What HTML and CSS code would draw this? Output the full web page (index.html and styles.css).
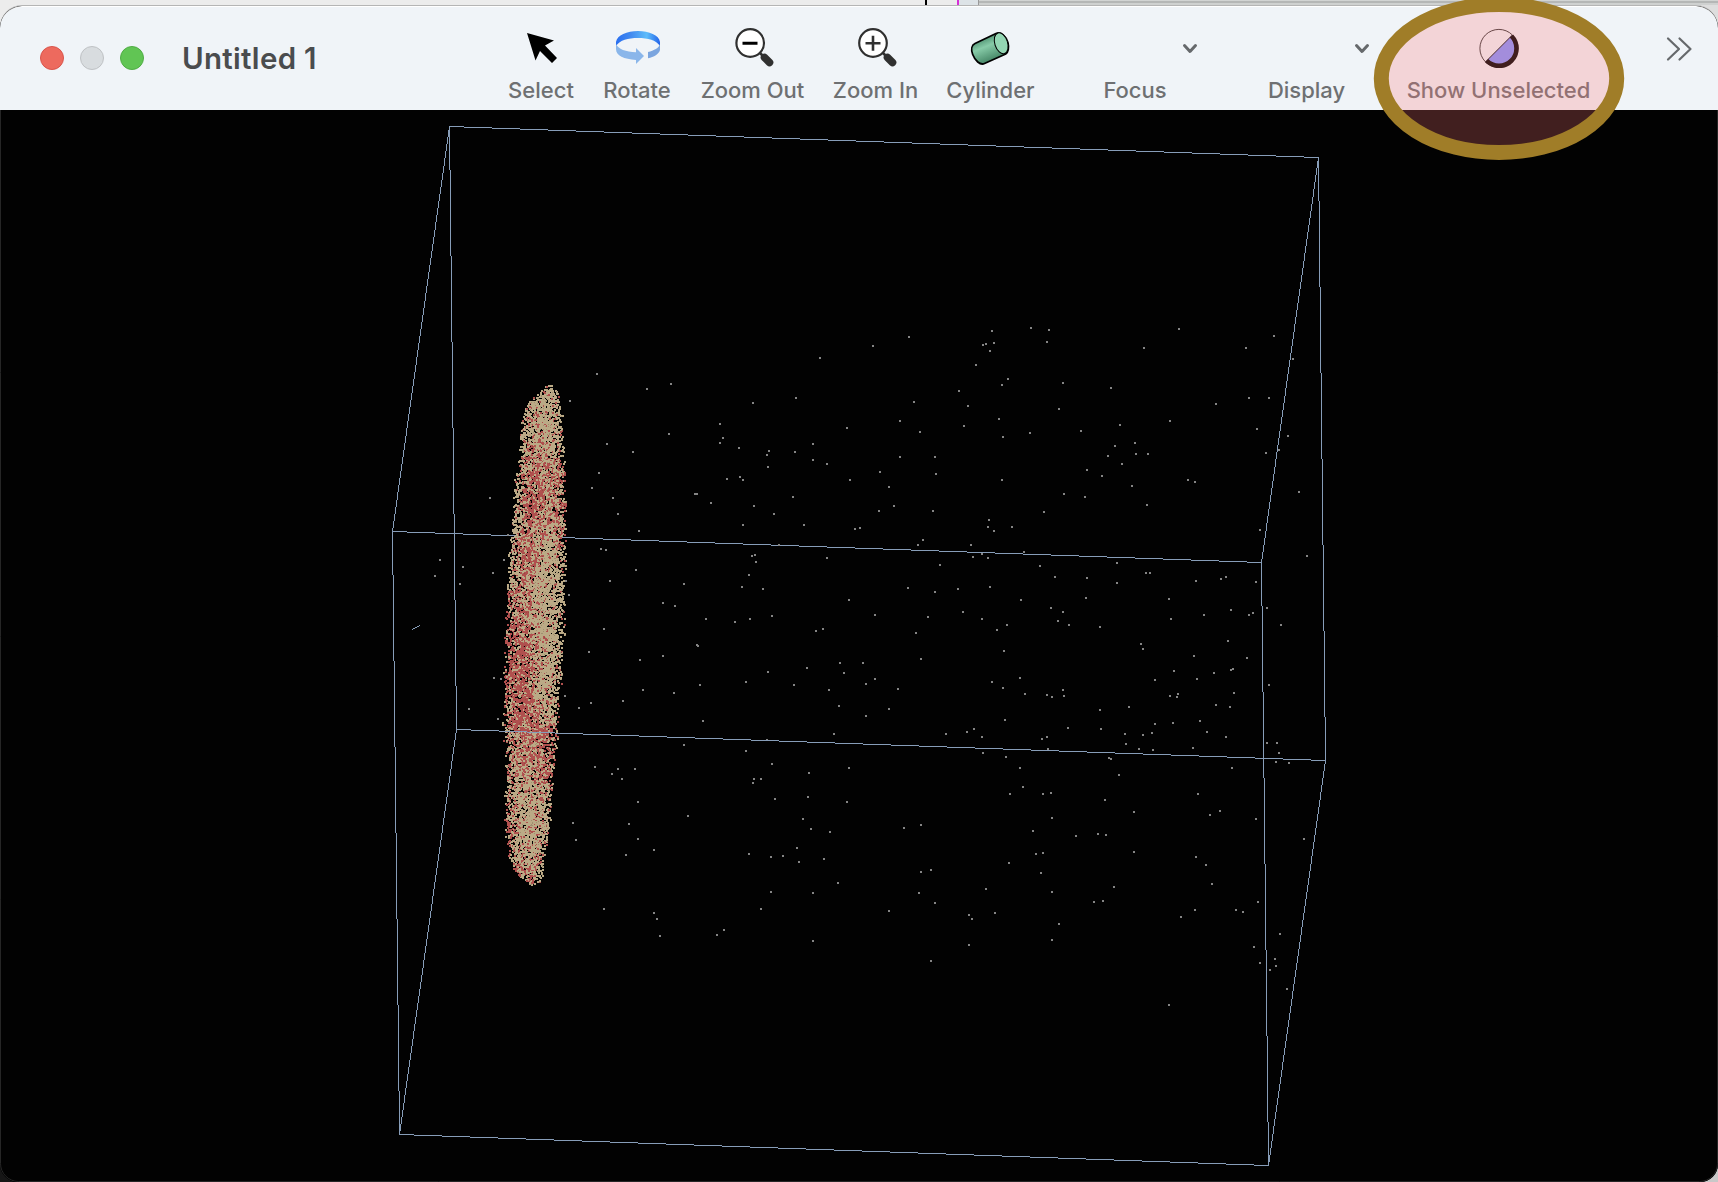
FILE: index.html
```html
<!DOCTYPE html>
<html lang="en">
<head>
<meta charset="utf-8">
<title>Untitled 1</title>
<link rel="stylesheet" href="styles.css">
</head>
<body>
<div class="desktop">
  <div class="behind"><span class="behind-left"></span><span class="tick"></span><span class="behind-gap"></span><span class="tick tick-pink"></span><span class="behind-blue"></span><span class="behind-right"></span></div>
  <main class="window">
    <header class="titlebar">
      <div class="lights"><i class="light red"></i><i class="light grey"></i><i class="light green"></i></div>
      <h1 class="title">Untitled 1</h1>
      <nav class="toolbar">
        <div class="tool">
          <svg class="icon" viewBox="0 0 48 40"><path d="M10 5 37 12.5 28 17.5 40 30 35 35 23 23 18.5 32.5Z"/></svg>
          <span class="label">Select</span>
        </div>
        <div class="tool">
          <svg class="icon" viewBox="0 0 48 40">
            <defs><linearGradient id="ring"><stop offset="0" stop-color="#2a6ff0"/><stop offset=".35" stop-color="#428bf0"/><stop offset=".7" stop-color="#5cbcfa"/><stop offset="1" stop-color="#2464ea"/></linearGradient></defs>
            <path fill="url(#ring)" d="M3 14C4 7 14 3 25 3S46 7 47 14V18C43 12 35 10 25 10S7 12 3 18Z"/>
            <path fill="#8ab6ea" d="M3 16C5 21 13 24 23 24.3V20L31 28 23 36V32C11 31 3 28 3 21Z"/>
            <path fill="#7ba5df" d="M35 24C41 22.5 46 20 47 16V22C46 26 41 29 35 30.3Z"/>
          </svg>
          <span class="label">Rotate</span>
        </div>
        <div class="tool">
          <svg class="icon" viewBox="0 0 48 40" fill="none" stroke="#303030"><path stroke-width="2.6" d="m31 25 3 3"/><path stroke-width="7.6" stroke-linecap="round" d="m35.500 29.500 5 5"/><circle cx="21.2" cy="15" r="13.8" fill="#fff" stroke-width="2.2"/><path stroke="#000" stroke-width="3" d="M13.5 15.3h15"/></svg>
          <span class="label">Zoom Out</span>
        </div>
        <div class="tool">
          <svg class="icon" viewBox="0 0 48 40" fill="none" stroke="#303030"><path stroke-width="2.6" d="m31 25 3 3"/><path stroke-width="7.6" stroke-linecap="round" d="m35.500 29.500 5 5"/><circle cx="21" cy="15" r="13.8" fill="#fff" stroke-width="2.2"/><path stroke-width="2.6" d="M13.5 15.3h15M21 7.8v15"/></svg>
          <span class="label">Zoom In</span>
        </div>
        <div class="tool">
          <svg class="icon" viewBox="0 0 48 40">
            <defs><linearGradient id="tube" gradientUnits="userSpaceOnUse" x1="17" y1="9" x2="26" y2="31"><stop offset="0" stop-color="#4c8f6e"/><stop offset=".4" stop-color="#87cba8"/><stop offset="1" stop-color="#4a8b6b"/></linearGradient></defs>
            <path fill="url(#tube)" stroke="#000" stroke-width="1.8" d="M8 15.500 29.500 5.300C34 3.500 39 8.500 40.900 14.500 42.200 19.500 41.200 24.500 38.700 26L17.500 35.500C13 37.500 8 32.500 5.700 26.500 3.800 21.500 4.700 17 8 15.500Z"/>
            <ellipse cx="34.200" cy="15.300" rx="6.400" ry="10.800" transform="rotate(-18 34.200 15.300)" fill="#93d6b3" stroke="#000" stroke-width="1"/>
          </svg>
          <span class="label">Cylinder</span>
        </div>
        <div class="tool">
          <svg class="icon chevron" viewBox="0 0 48 40"><path d="m18.500 17.500 5.500 6 5.500-6"/></svg>
          <span class="label">Focus</span>
        </div>
        <div class="tool">
          <svg class="icon chevron" viewBox="0 0 48 40"><path d="m18.500 17.500 5.500 6 5.500-6"/></svg>
          <span class="label">Display</span>
        </div>
        <div class="tool">
          <svg class="icon" viewBox="0 0 48 40"><g transform="translate(-.6 0)"><path fill="#8596ff" d="M38 7A19 19 0 0 1 11.200 33.800Z"/><circle cx="24.500" cy="20.400" r="19" fill="none" stroke="#222" stroke-width=".9"/><path fill="none" stroke="#000" stroke-width=".9" d="M38 7 11.200 33.800"/><path fill="none" stroke="#000" stroke-width="4.600" d="M37 8A17.300 17.300 0 0 1 12.200 32.700"/></g></svg>
          <span class="label">Show Unselected</span>
        </div>
        <div class="tool more"><svg class="icon" viewBox="0 0 48 40"><path d="M12 10.500 23 21 12 31.500M23.500 10.500 34.500 21 23.500 31.500"/></svg></div>
      </nav>
    </header>
    <canvas class="scene" id="scene" width="1718" height="1072"></canvas>
  </main>
  <svg class="marker" viewBox="0 0 260 170"><ellipse cx="130" cy="82.500" rx="117.700" ry="74" /></svg>
</div>
<script src="scene.js"></script>
</body>
</html>
```
FILE: styles.css
```css
* { box-sizing: border-box; }
body { margin: 0; overflow: hidden; font-family: Inter, "Liberation Sans", sans-serif; }
.desktop { position: relative; width: 1718px; height: 1182px; overflow: hidden; background: linear-gradient(90deg, #161616 50%, #c8c8c8 50%); }
.behind { display: flex; height: 24px; background: #ececec; }
.behind-left { width: 925px; }
.tick { width: 2px; background: #000; }
.behind-gap { width: 30px; }
.tick-pink { background: #d62fd8; }
.behind-blue { width: 19px; background: #dde3e7; }
.behind-right { flex: 1; border-left: 1px solid #999; background: linear-gradient(#d2d4d3 1px, #b5b7b6 1px 3px, #cfd1d0 3px 5px, #dedede 5px); }
.window { position: relative; margin-top: -18px; height: 1176px; border-radius: 22px 22px 18px 18px; overflow: hidden; background: #020202; box-shadow: 0 -1px 0 #b5b5b5; }
.titlebar { display: flex; height: 104px; background: #f0f4f8; border-top: 1px solid #fff; border-radius: 22px 22px 0 0; }
.lights { display: flex; gap: 16px; padding: 39px 0 0 40px; }
.light { width: 24px; height: 24px; border-radius: 50%; border: 1px solid #d9554c; background: #ed6a5e; }
.light.grey { background: #d8dcdf; border-color: #bfc2c5; }
.light.green { background: #61c554; border-color: #50ad45; }
.title { width: 349px; margin: 30px 0 0; padding-left: 38px; font-size: 29.500px; line-height: 42px; font-weight: 600; color: #4a4c4e; letter-spacing: .3px; white-space: nowrap; }
.toolbar { display: grid; grid-template-columns: 96px 96px 135px 111px 119px 170px 173px 211px 114px; }
.tool { display: flex; flex-direction: column; align-items: center; padding-top: 21px; }
.icon { display: block; width: 48px; height: 40px; flex: none; }
.label { margin-top: 8px; font-size: 22px; line-height: 28px; font-weight: 450; color: #6e7072; white-space: nowrap; }
.chevron { margin-left: 110px; }
.chevron path { fill: none; stroke: #66696c; stroke-width: 3; stroke-linecap: round; stroke-linejoin: round; }
.more { padding-left: 37px; }
.more path { fill: none; stroke: #66696c; stroke-width: 2.2; stroke-linecap: round; stroke-linejoin: round; }
.scene { display: block; width: 1718px; height: 1072px; }
.marker { position: absolute; left: 1369px; top: -4px; width: 260px; height: 170px; fill: rgba(250,116,118,.255); stroke: #a07d28; stroke-width: 15; }
```
FILE: scene.js
```javascript
// The canvas starts below the 110px header; coordinates are window coordinates.
const ctx = document.getElementById('scene').getContext('2d');
ctx.translate(0, -110);
ctx.fillStyle = '#020202';
ctx.fillRect(0, 110, 1718, 1072);
ctx.strokeStyle = '#262626';
ctx.beginPath();
ctx.roundRect(.5, 60, 1717, 1121.5, 18);
ctx.stroke();

function line(x0, y0, x1, y1) {
  ctx.fillStyle = '#879db8';
  const n = Math.max(Math.abs(x1 - x0), Math.abs(y1 - y0));
  for (let i = 0; i <= n; i++) {
    ctx.fillRect(Math.round(x0 + (x1 - x0) * i / n), Math.round(y0 + (y1 - y0) * i / n), 1, 1);
  }
}
const A = [449, 126], B = [1318, 157], C = [392, 531], D = [1261, 562];
const E = [456, 729], F = [1325, 760], G = [399, 1134], H = [1268, 1165];
[[A, B], [A, C], [B, D], [C, D], [A, E], [C, G], [B, F], [D, H], [G, H], [E, G], [F, H]]
  .forEach(([p, q]) => line(...p, ...q));
line(412, 629, 419, 625);

// Stray events, grouped by tile; offsets inside a tile are in thirds of a pixel.
const tiles = [
  [380, 320, '651,162 570,243 801,207 873,192 867,342 681,372 759,396 657,459 636,504 699,534 714,582 777,633 330,534 384,645 663,687 678,690 768,750 690,783 558,783 567,825 672,927 627,996 780,1020 849,1008 849,849 885,858 912,792 978,897 951,975 954,978 960,1095 789,1110 882,1119 729,1143 633,1149 597,1164 555,1128 342,1074 363,1077 267,1167 354,1197 180,720 165,768 249,741 240,792 339,759 372,720 1320,114 1248,234 1119,249 1020,312 1029,354 1020,369 1077,384 1167,393 1161,405 1164,441 1245,396 1299,372 1299,420 1341,432 1401,324 1041,477 1080,471 1089,480 945,522 951,522 993,549 1122,558 1089,615 1182,582 1239,531 1272,615 1197,675 1116,708 1125,705 1128,726 1107,765 1086,801 1149,807 1176,888 1110,897 1065,906 1098,1086 1164,1056 1242,1095 1281,1044 1308,933 1329,927 1341,714 1347,1110 1377,1158 1380,1029 1392,1059 1407,840'],
  [850, 310, '69,108 177,81 426,63 432,99 408,102 399,105 420,123 378,165 543,54 597,60 591,96 474,207 456,225 327,243 354,288 192,276 150,333 210,366 342,348 447,327 459,381 540,369 627,297 639,219 783,234 693,363 882,114 987,57 1188,114 1272,78 1329,147 1197,264 1257,264 1098,282 960,333 810,345 795,408 855,399 858,432 894,432 774,438 816,462 846,528 711,480 756,498 642,552 705,561 582,606 456,510 258,492 255,441 150,441 90,486 1,510 117,531 132,588 87,603 249,603 417,630 414,651 432,663 486,651 15,657 30,654 219,690 204,705 363,705 369,741 396,732 414,744 522,726 570,768 270,765 174,834 255,846 324,837 420,831 615,801 711,804 801,759 801,819 888,789 900,789 1014,510 1035,516 891,585 1221,357 1314,378 1287,420 1248,429 1347,546 1230,660 1371,738 1038,813 1113,807 1128,801 1218,816 957,867 708,864 513,870 603,894 639,906 624,933 657,945 750,951 963,927 1062,915 1143,900 1197,915 1209,909 1251,894 1293,945 75,915 234,921 339,906 396,927 471,945 441,960 198,969 462,1023 213,1047 39,1059 75,1107 48,1122 144,1137 117,1197 48,1218 426,1116 459,1134 510,1104 525,1152 591,1155 606,1161 639,1140 642,1158 750,1200 837,1191 873,1002 879,1017 1134,993 1032,1038 1191,1044 972,1083 915,1110 1041,1107 1092,1089 1143,1080 1149,1077 1257,1125 1152,1149 960,1158 981,1161 984,1152 1098,1185 1140,1191'],
  [560, 700, '57,24 93,9 189,3 429,63 372,135 558,153 105,201 174,207 156,222 186,237 225,207 234,306 207,372 384,348 39,369 48,420 234,417 282,450 198,465 132,627 282,639 291,657 300,708 471,705 492,690 603,627 633,576 567,462 633,471 669,468 711,444 717,486 753,387 729,357 744,291 747,219 636,192 582,237 579,249 603,237 645,297 810,396 792,477 834,549 759,579 759,723 861,306 867,204 822,102 837,18 918,48 987,27 621,120 1032,384 1083,375 1083,516 1113,510 1077,579 1125,609 987,633 1113,783'],
  [940, 700, '18,102 81,96 102,87 126,111 195,60 129,159 198,171 240,204 249,261 210,282 309,282 333,279 336,354 279,393 288,462 309,459 207,489 303,519 336,576 138,567 165,639 87,645 96,657 87,735 357,672 336,720 306,117 321,111 324,147 384,84 480,30 483,87 567,21 555,102 558,132 609,105 636,99 645,72 597,147 639,150 699,69 780,63 801,96 759,144 828,15 870,21 858,111 507,174 513,177 537,225 495,300 582,336 408,408 474,402 498,405 582,456 522,561 462,606 489,603 774,282 810,345 840,333 768,471 798,495 816,552 765,630 723,651 687,915 876,204 981,129 1011,129 1017,159 1008,186 1047,189 948,357 1092,417 954,606 888,630 909,636 942,741 960,789 1020,702 1005,777 1008,798 990,810 1041,867']
];
ctx.fillStyle = '#858585';
for (const [ox, oy, list] of tiles) {
  for (const pair of list.split(' ')) {
    const [x, y] = pair.split(',').map(Number);
    ctx.fillRect(Math.round(ox + x / 3) - 1, Math.round(oy + y / 3) - 1, 2, 2);
  }
}

// Dense cluster: y, left edge, right edge, then the share of red at four stops across.
const profile = [
  [385, 548, 553, .1, .1, .1, .1], [393, 536, 558, .1, .1, .1, .1], [403, 527, 561, .25, .1, .1, .2],
  [420, 523, 561, .2, .3, .1, .12], [440, 521, 562, .1, .4, .15, .15], [470, 517, 564, .3, .6, .35, .45],
  [505, 513, 565, .08, .75, .5, .65], [530, 511, 565, .06, .6, .3, .45], [555, 509, 565, .1, .65, .12, .12],
  [590, 507, 564, .3, .5, .12, .12], [620, 506, 564, .65, .5, .12, .1], [655, 505, 562, .8, .65, .15, .15],
  [695, 504, 559, .6, .8, .2, .15], [730, 504, 557, .15, .7, .6, .5], [760, 506, 554, .3, .5, .55, .5],
  [790, 506, 552, .3, .15, .25, .3], [825, 506, 549, .75, .12, .12, .12], [850, 508, 545, .6, .15, .2, .2],
  [865, 512, 542, .5, .4, .3, .3], [875, 519, 541, .5, .4, .3, .2], [884, 530, 537, .3, .3, .3, .3]
];
let seed = 20117;
function rnd() {
  seed = (seed * 1664525 + 1013904223) >>> 0;
  return seed / 4294967296;
}
for (let i = 0; i < 13000;) {
  const y = 385 + rnd() * 499;
  const k = Math.max(1, profile.findIndex(p => p[0] >= y));
  const a = profile[k - 1], b = profile[k], t = (y - a[0]) / (b[0] - a[0]);
  const row = a.map((v, j) => v + (b[j] - v) * t);
  const w = row[2] - row[1];
  if (rnd() > (w / 58) ** 1.3) continue;
  const v = rnd() * 2 - 1;
  if (rnd() > (1 - v * v) ** .85) continue;
  const u = .5 + .5 * v;
  const s = Math.min(2.999, u * 3), c = Math.floor(s);
  const red = row[3 + c] + (row[4 + c] - row[3 + c]) * (s - c);
  const x = Math.round(row[1] - 2 + u * (w + 3)), yy = Math.round(y);
  const isRed = rnd() < red;
  ctx.fillStyle = isRed ? '#b0504e' : '#bbaa86';
  ctx.fillRect(x, yy, 2, 2);
  if (rnd() < .25) {
    ctx.fillStyle = isRed ? '#9a4643' : '#a08f70';
    ctx.fillRect(x + 1, yy + 1, 1, 1);
  }
  i++;
}
line(...E, ...F);
```
